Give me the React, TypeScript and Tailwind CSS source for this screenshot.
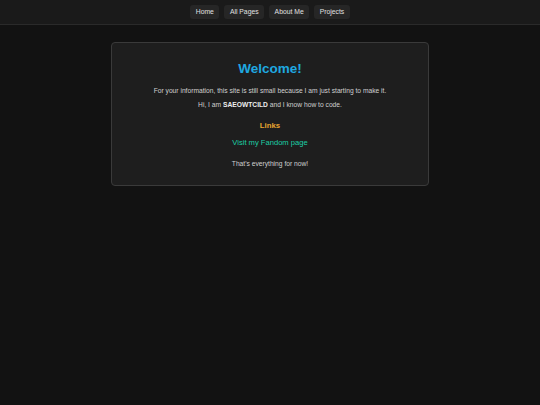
import React from "react";

const navItems = ["Home", "All Pages", "About Me", "Projects"];

export default function App() {
  return (
    <div
      className="min-h-[405px] bg-[#121212] text-[#d0d0d0]"
      style={{ fontFamily: '"Liberation Sans", Arial, sans-serif' }}
    >
      {/* Top navigation */}
      <header className="h-[25px] bg-[#1a1a1a] border-b border-[#2a2a2a] flex items-center justify-center gap-[5px]">
        {navItems.map((item) => (
          <a
            key={item}
            href="#"
            className="h-[14px] px-[5.5px] flex items-center rounded-[3px] bg-[#262626] text-[6.8px] text-[#e0e0e0]"
          >
            {item}
          </a>
        ))}
      </header>

      {/* Main card */}
      <main className="pt-[17px] flex justify-center">
        <section className="w-[318px] rounded-[4px] border border-[#3a3a3a] bg-[#1e1e1e] pt-[19px] pb-[17px] text-center">
          <h1 className="text-[13.5px] leading-[14px] font-bold text-[#1fa8e0]">Welcome!</h1>
          <p className="mt-[9.5px] text-[6.7px] leading-[9px]">
            For your information, this site is still small because I am just starting to make it.
          </p>
          <p className="mt-[5px] text-[6.7px] leading-[9px]">
            Hi, I am <strong className="font-bold text-[#eeeeee]">SAEOWTCILD</strong> and I know how to code.
          </p>
          <h2 className="mt-[12.5px] text-[7.8px] leading-[10px] font-bold text-[#e8a530]">Links</h2>
          <a href="#" className="mt-[7px] block text-[7.6px] leading-[10px] text-[#1ccfa6]">
            Visit my Fandom page
          </a>
          <p className="mt-[10.5px] text-[6.7px] leading-[9px]">That's everything for now!</p>
        </section>
      </main>
    </div>
  );
}
